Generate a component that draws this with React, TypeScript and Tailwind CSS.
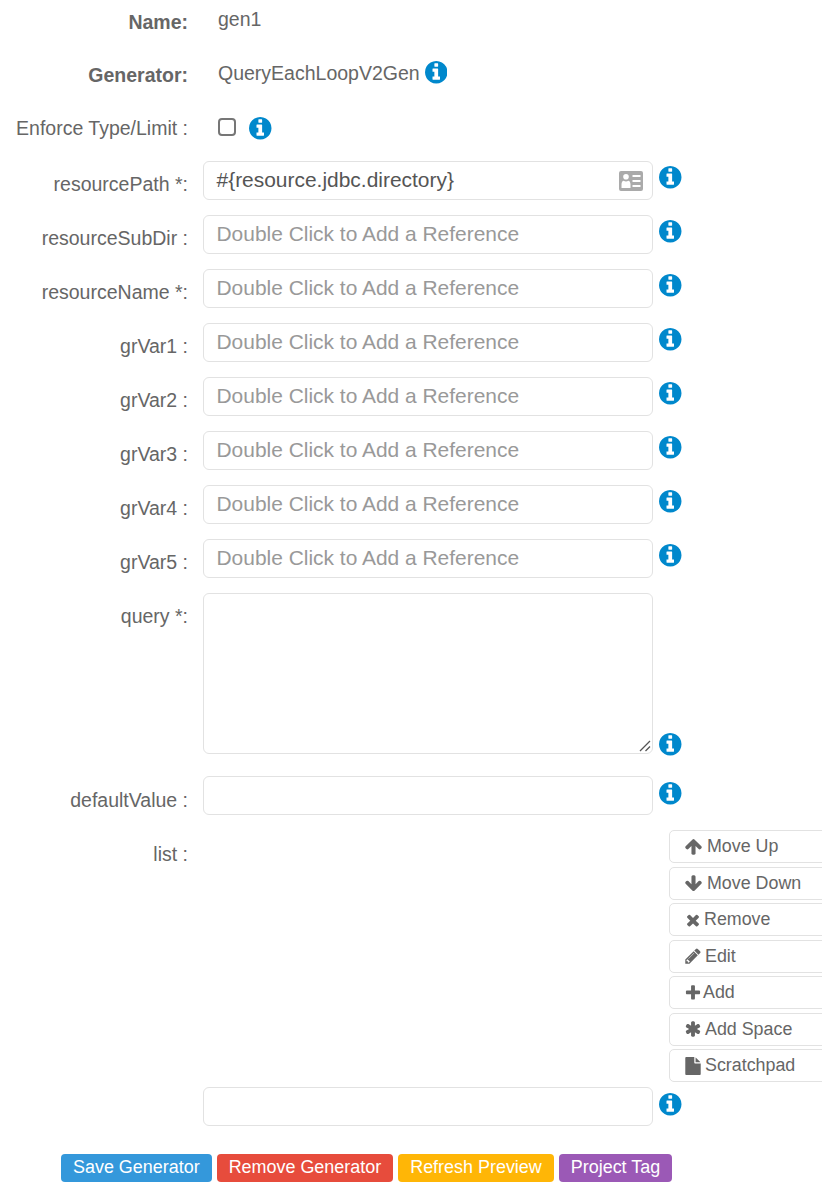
import React from "react";

const I = ({ d, vb = "0 0 1792 1792", className = "" }: { d: string; vb?: string; className?: string }) => (
  <svg viewBox={vb} className={className} fill="currentColor" aria-hidden="true" preserveAspectRatio="none">
    <path d={d} />
  </svg>
);

const INFO = "M1024 1376v-160q0-14-9-23t-23-9h-96v-512q0-14-9-23t-23-9h-320q-14 0-23 9t-9 23v160q0 14 9 23t23 9h96v320h-96q-14 0-23 9t-9 23v160q0 14 9 23t23 9h448q14 0 23-9t9-23zm-128-896v-160q0-14-9-23t-23-9h-192q-14 0-23 9t-9 23v160q0 14 9 23t23 9h192q14 0 23-9t9-23zm640 416q0 209-103 385.5t-279.5 279.5-385.5 103-385.5-103-279.5-279.5-103-385.5 103-385.5 279.5-279.5 385.5-103 385.5 103 279.5 279.5 103 385.5z";
const Info = () => (
  <span className="block w-[22.5px] h-[22.5px] text-[#0088cc]">
    <svg viewBox="0 128 1536 1536" className="w-full h-full" fill="currentColor" aria-hidden="true"><path d={INFO} /></svg>
  </span>
);

const Card = () => (
  <svg viewBox="0 0 24 20" className="w-full h-full" fill="currentColor" aria-hidden="true">
    <path
      fillRule="evenodd"
      d="M2 0h20a2 2 0 0 1 2 2v16a2 2 0 0 1-2 2H2a2 2 0 0 1-2-2V2a2 2 0 0 1 2-2zM7 3a2.800 2.800 0 1 0 0 5.600 2.800 2.800 0 0 0 0-5.600zM2.500 17h9v-3.500c0-2.200-1-3.800-2.200-3.800-.7.500-1.400.8-2.300.8s-1.600-.3-2.300-.8c-1.200 0-2.200 1.600-2.200 3.800zM13.500 4v2H21.500V4zM13.500 9v2H21.500V9zM13.500 14v2H21.500V14z"
    />
  </svg>
);

const ICONS: Record<string, string> = {
  up: "M1675 971q0 51-37 90l-75 75q-38 38-91 38-54 0-90-38l-294-293v704q0 52-37.5 84.5t-90.5 32.5h-128q-53 0-90.5-32.5t-37.5-84.5v-704l-294 293q-36 38-90 38t-90-38l-75-75q-38-38-38-90 0-53 38-91l651-651q35-37 90-37 54 0 91 37l651 651q37 39 37 91z",
  down: "M1675 832q0 53-37 90l-651 652q-39 37-91 37-53 0-90-37l-651-652q-38-36-38-90 0-53 38-91l74-75q39-37 91-37 53 0 90 37l294 294v-704q0-52 38-90t90-38h128q52 0 90 38t38 90v704l294-294q37-37 90-37 52 0 91 37l75 75q37 39 37 91z",
  remove: "M1490 1322q0 40-28 68l-136 136q-28 28-68 28t-68-28l-294-294-294 294q-28 28-68 28t-68-28l-136-136q-28-28-28-68t28-68l294-294-294-294q-28-28-28-68t28-68l136-136q28-28 68-28t68 28l294 294 294-294q28-28 68-28t68 28l136 136q28 28 28 68t-28 68l-294 294 294 294q28 28 28 68z",
  edit: "M491 1536l91-91-235-235-91 91v107h128v128h107zm523-928q0-22-22-22-10 0-17 7l-542 542q-7 7-7 17 0 22 22 22 10 0 17-7l542-542q7-7 7-17zm-54-192l416 416-832 832h-416v-416zm683 96q0 53-37 90l-166 166-416-416 166-165q36-38 90-38 53 0 91 38l235 234q37 39 37 91z",
  add: "M1600 736v192q0 40-28 68t-68 28h-416v416q0 40-28 68t-68 28h-192q-40 0-68-28t-28-68v-416h-416q-40 0-68-28t-28-68v-192q0-40 28-68t68-28h416v-416q0-40 28-68t68-28h192q40 0 68 28t28 68v416h416q40 0 68 28t28 68z",
  space: "M1546 1050q46 26 59.5 77.5t-12.5 97.5l-64 110q-26 46-77.5 59.5t-97.5-12.5l-266-153v307q0 52-38 90t-90 38h-128q-52 0-90-38t-38-90v-307l-266 153q-46 26-97.5 12.5t-77.5-59.5l-64-110q-26-46-12.5-97.5t59.5-77.5l266-154-266-154q-46-26-59.5-77.5t12.5-97.5l64-110q26-46 77.5-59.5t97.5 12.5l266 153v-307q0-52 38-90t90-38h128q52 0 90 38t38 90v307l266-153q46-26 97.5-12.5t77.5 59.5l64 110q26 46 12.5 97.5t-59.5 77.5l-266 154z",
  file: "M1152 512v-472q22 14 36 28l408 408q14 14 28 36h-472zm-128 32q0 40 28 68t68 28h544v1056q0 40-28 68t-68 28h-1344q-40 0-68-28t-28-68v-1600q0-40 28-68t68-28h800v544z",
};

const Label = ({ children, bold = false }: { children: React.ReactNode; bold?: boolean }) => (
  <div className={`w-[188px] shrink-0 text-right text-[19.5px] leading-[26px] text-[#666666] ${bold ? "font-bold" : ""}`}>{children}</div>
);

const inputBox = "h-[39px] w-[450px] shrink-0 rounded-[6px] border border-[#e2e2e2] bg-white pl-[12.5px] pr-[13px] text-[20.95px] leading-[35px]";

const Field = ({ label, value }: { label: string; value?: string }) => (
  <div className="flex h-[39px] mb-[15px]">
    <div className="pt-[10px]"><Label>{label}</Label></div>
    <div className={`ml-[15px] relative ${inputBox} ${value ? "text-[#555555]" : "text-[#999999]"}`}>
      {value ?? "Double Click to Add a Reference"}
      {value && (
        <span className="absolute right-[9px] top-[9px] block w-[24px] h-[20px] text-[#aaaaaa]">
          <Card />
        </span>
      )}
    </div>
    <div className="ml-[6px] pt-[5px]"><Info /></div>
  </div>
);

const ListButton = ({ icon, label, w, gap }: { icon: string; label: string; w: number; gap: number }) => (
  <div className="flex items-center h-[33px] mb-[3.5px] w-[170px] rounded-[5px] border border-[#e2e2e2] bg-white pl-[14px] text-[17.85px] text-[#666666]">
    <span className="block shrink-0" style={{ width: w, height: w, marginRight: gap }}>
      <I d={ICONS[icon]} className="w-full h-full" />
    </span>
    {label}
  </div>
);

const ActionButton = ({ label, color }: { label: string; color: string }) => (
  <div className={`h-[28px] rounded-[4px] px-[12px] text-[17.95px] leading-[26px] text-white ${color}`}>{label}</div>
);

export default function App() {
  return (
    <div
      className="relative w-[822px] h-[1198px] overflow-hidden bg-white"
      style={{ fontFamily: '"Liberation Sans", Arial, sans-serif' }}
    >
      <div className="flex h-[53px] pt-[9px]">
        <Label bold>Name:</Label>
        <div className="ml-[30px] -mt-[3px] text-[19.5px] leading-[26px] text-[#666666]">gen1</div>
      </div>
      <div className="flex h-[53px] pt-[9px]">
        <Label bold>Generator:</Label>
        <div className="ml-[30px] -mt-[2px] flex text-[19.5px] leading-[26px] text-[#666666]">
          QueryEachLoopV2Gen
          <span className="ml-[5px] mt-[1px]"><Info /></span>
        </div>
      </div>
      <div className="flex h-[49px] pt-[9px]">
        <Label>Enforce Type/Limit :</Label>
        <div className="ml-[30px] mt-[3px] w-[18px] h-[18px] rounded-[4px] border-2 border-[#767676] bg-white" />
        <span className="ml-[13px] mt-[2px]"><Info /></span>
      </div>
      <div className="pt-[6px]">
        <Field label="resourcePath *:" value="#{resource.jdbc.directory}" />
        <Field label="resourceSubDir :" />
        <Field label="resourceName *:" />
        <Field label="grVar1 :" />
        <Field label="grVar2 :" />
        <Field label="grVar3 :" />
        <Field label="grVar4 :" />
        <Field label="grVar5 :" />
      </div>
      <div className="flex h-[161px]">
        <div className="pt-[10px]"><Label>query *:</Label></div>
        <div className="ml-[15px] relative h-[161px] w-[450px] shrink-0 rounded-[6px] border border-[#e2e2e2] bg-white">
          <svg viewBox="0 0 14 14" className="absolute right-0 bottom-0 w-[14px] h-[14px] text-[#555555]" aria-hidden="true">
            <path d="M2 12 L12 2 M7.5 12 L12 7.5" stroke="currentColor" strokeWidth="1.3" fill="none" />
          </svg>
        </div>
        <div className="ml-[6px] pt-[140px]"><Info /></div>
      </div>
      <div className="mt-[22px] flex h-[39px]">
        <div className="pt-[11px]"><Label>defaultValue :</Label></div>
        <div className={`ml-[15px] ${inputBox}`} />
        <div className="ml-[6px] pt-[6px]"><Info /></div>
      </div>
      <div className="mt-[15px] flex h-[257px]">
        <div className="pt-[11px]"><Label>list :</Label></div>
        <div className="ml-[481px] shrink-0">
          <ListButton icon="up" label="Move Up" w={19} gap={4} />
          <ListButton icon="down" label="Move Down" w={19} gap={4} />
          <ListButton icon="remove" label="Remove" w={18} gap={2} />
          <ListButton icon="edit" label="Edit" w={18} gap={3} />
          <ListButton icon="add" label="Add" w={18} gap={1} />
          <ListButton icon="space" label="Add Space" w={18} gap={3} />
          <ListButton icon="file" label="Scratchpad" w={18} gap={3} />
        </div>
      </div>
      <div className="flex h-[39px] pl-[203px]">
        <div className={inputBox} />
        <div className="ml-[6px] pt-[6px]"><Info /></div>
      </div>
      <div className="mt-[28px] flex gap-[5px] pl-[61px]">
        <ActionButton label="Save Generator" color="bg-[#3498db]" />
        <ActionButton label="Remove Generator" color="bg-[#e74c3c]" />
        <ActionButton label="Refresh Preview" color="bg-[#ffb606]" />
        <ActionButton label="Project Tag" color="bg-[#9b59b6]" />
      </div>
    </div>
  );
}
